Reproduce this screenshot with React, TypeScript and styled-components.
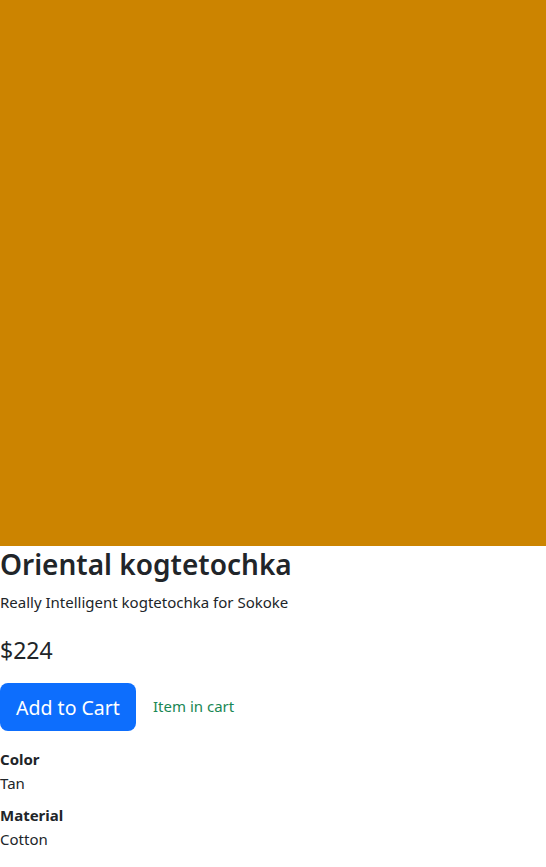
import React from "react";
import styled, { createGlobalStyle } from "styled-components";

const GlobalStyle = createGlobalStyle`
  html, body {
    margin: 0;
    padding: 0;
    background: #ffffff;
  }
  body {
    font-family: "Noto Sans", "Open Sans", sans-serif;
    font-size: 16px;
    line-height: 1.5;
    color: #212529;
  }
  * { box-sizing: border-box; }
`;

const Page = styled.main`
  display: flex;
  flex-direction: column;
  width: 546px;
`;

const ProductImage = styled.div<{ $color: string }>`
  width: 546px;
  height: 546px;
  background: ${(p) => p.$color};
`;

const Title = styled.h1`
  margin: 0 0 8px;
  font-size: 28px;
  font-weight: 600;
  line-height: 36px;
  color: #212529;
`;

const Description = styled.p`
  margin: 0 0 18px;
  font-size: 15px;
  line-height: 24px;
`;

const Price = styled.p`
  margin: 0 0 15px;
  font-size: 23px;
  line-height: 36px;
`;

const ActionRow = styled.div`
  display: flex;
  align-items: center;
  gap: 17px;
  margin-bottom: 16px;
`;

const CartButton = styled.button`
  display: inline-flex;
  align-items: center;
  justify-content: center;
  width: 136px;
  height: 48px;
  padding: 0;
  border: none;
  border-radius: 8px;
  background: #0d6efd;
  color: #ffffff;
  font-family: inherit;
  font-size: 19.5px;
  cursor: pointer;
`;

const CartStatus = styled.span`
  font-size: 15px;
  color: #198754;
  line-height: 24px;
  margin-top: -3px;
`;

const Specs = styled.dl`
  margin: 0;
`;

const SpecName = styled.dt`
  font-weight: 700;
  font-size: 15px;
  line-height: 24px;
`;

const SpecValue = styled.dd`
  margin: 0 0 8px;
  font-size: 15px;
  line-height: 24px;
`;

const specs = [
  { name: "Color", value: "Tan" },
  { name: "Material", value: "Cotton" },
];

export default function App() {
  return (
    <>
      <GlobalStyle />
      <Page>
        <ProductImage $color="#cc8400" />
        <Title>Oriental kogtetochka</Title>
        <Description>Really Intelligent kogtetochka for Sokoke</Description>
        <Price>$224</Price>
        <ActionRow>
          <CartButton>Add to Cart</CartButton>
          <CartStatus>Item in cart</CartStatus>
        </ActionRow>
        <Specs>
          {specs.map((s) => (
            <React.Fragment key={s.name}>
              <SpecName>{s.name}</SpecName>
              <SpecValue>{s.value}</SpecValue>
            </React.Fragment>
          ))}
        </Specs>
      </Page>
    </>
  );
}
